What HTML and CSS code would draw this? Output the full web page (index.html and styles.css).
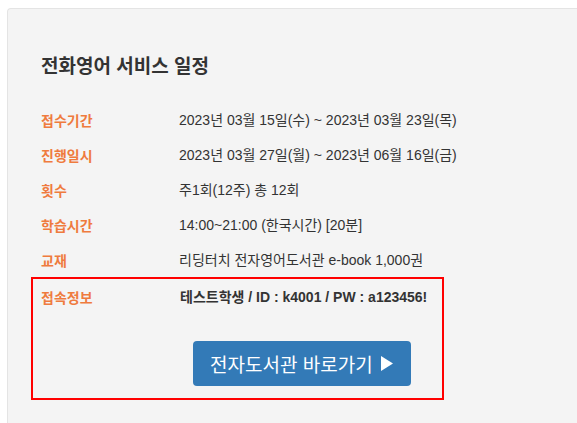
FILE: index.html
```html
<!DOCTYPE html>
<html lang="ko">
<head>
    <meta charset="UTF-8">
    <meta name="viewport" content="width=device-width, initial-scale=1.0">
    <title>전화영어 서비스 일정</title>
    <link rel="stylesheet" href="styles.css">
</head>
<body>
    <div class="panel">
        <h2 class="panel-title">전화영어 서비스 일정</h2>

        <div class="info-list">
            <div class="info-row">
                <span class="info-label">접수기간</span>
                <span class="info-value">2023년 03월 15일(수) ~ 2023년 03월 23일(목)</span>
            </div>
            <div class="info-row">
                <span class="info-label">진행일시</span>
                <span class="info-value">2023년 03월 27일(월) ~ 2023년 06월 16일(금)</span>
            </div>
            <div class="info-row">
                <span class="info-label">횟수</span>
                <span class="info-value">주1회(12주) 총 12회</span>
            </div>
            <div class="info-row">
                <span class="info-label">학습시간</span>
                <span class="info-value">14:00~21:00 (한국시간) [20분]</span>
            </div>
            <div class="info-row">
                <span class="info-label">교재</span>
                <span class="info-value">리딩터치 전자영어도서관 e-book 1,000권</span>
            </div>
        </div>

        <!-- 접속정보 -->
        <div class="access-box">
            <div class="access-row">
                <span class="info-label">접속정보</span>
                <div class="access-value">
                    <strong>테스트학생 / ID : k4001 / PW : a123456!</strong>
                    <a href="#" class="library-btn">
                        전자도서관 바로가기
                        <svg class="arrow" width="12" height="15" viewBox="0 0 12 15"><polygon points="0,0 12,7.5 0,15" fill="#fff"/></svg>
                    </a>
                </div>
            </div>
        </div>
    </div>
</body>
</html>
```

FILE: styles.css
```css
html, body {
    margin: 0;
    background: #fff;
    overflow: hidden;
}
body {
    font-family: "Liberation Sans", "Noto Sans CJK KR", sans-serif;
    color: #333;
}
.panel {
    margin: 8px 0 0 7px;
    height: calc(100vh - 8px);
    box-sizing: border-box;
    padding: 42px 0 0 23px;
    background: #f4f4f4;
    border: 1px solid #e4e4e4;
    border-right: none;
    border-bottom: none;
    border-radius: 4px 0 0 0;
}
.panel-title {
    margin: 0 0 23px 0;
    padding-left: 10px;
    font-family: "Noto Sans CJK KR", sans-serif;
    font-size: 19px;
    line-height: 28px;
    font-weight: bold;
    color: #333;
}
.info-list {
    padding-left: 10px;
}
.info-row {
    display: flex;
    height: 35px;
    align-items: center;
}
.info-label {
    width: 138px;
    flex-shrink: 0;
    font-family: "Noto Sans CJK KR", sans-serif;
    font-size: 14px;
    line-height: 20px;
    font-weight: bold;
    color: #ef7b3e;
}
.info-value {
    font-size: 14px;
    line-height: 20px;
    color: #333;
}
.access-box {
    width: 413px;
    box-sizing: border-box;
    border: 2px solid #ff0000;
    padding: 8px 0 12px 8px;
}
.access-row {
    display: flex;
}
.access-value {
    display: flex;
    flex-direction: column;
    align-items: flex-start;
}
.access-value strong {
    font-size: 14px;
    line-height: 20px;
    margin-left: 1px;
}
.library-btn {
    display: flex;
    align-items: center;
    gap: 8px;
    margin: 34px 0 0 14px;
    width: 218px;
    height: 45px;
    box-sizing: border-box;
    padding-left: 17px;
    background: #337ab7;
    border-radius: 4px;
    color: #fff;
    text-decoration: none;
    font-family: "Noto Sans CJK KR", sans-serif;
    font-size: 19px;
}
.arrow {
    display: block;
}
```
